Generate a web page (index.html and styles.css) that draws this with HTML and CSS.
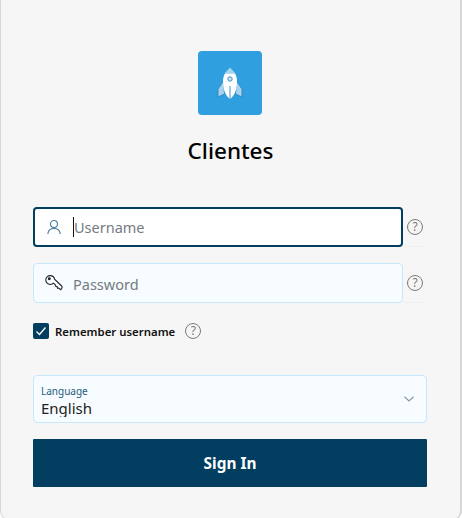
FILE: index.html
```html
<!DOCTYPE html>
<html lang="en">
<head>
<meta charset="utf-8">
<title>Clientes</title>
<link rel="stylesheet" href="styles.css">
</head>
<body>
<main class="card">
  <div class="logo">
    <svg width="32" height="32" viewBox="0 0 32 32">
      <path d="M9.500 14 L4 22 V30 L10.500 27 Z" fill="#a6d3ef" stroke="#2f7fb5" stroke-width=".8"/>
      <path d="M22.500 14 L28 22 V30 L21.500 27 Z" fill="#a6d3ef" stroke="#2f7fb5" stroke-width=".8"/>
      <path d="M16 .5 L10.500 6.500 H21.500 Z" fill="#a6d3ef"/>
      <path d="M16 32 C11 28 9 22 9 14 C9 11 9.800 8.500 11 6.500 H21 C22.200 8.500 23 11 23 14 C23 22 21 28 16 32 Z" fill="#fff"/>
      <circle cx="16" cy="12" r="2.200" fill="#cfe6f6" stroke="#3b8fc8" stroke-width="1"/>
      <path d="M16 19 V32" stroke="#5aa6d8" stroke-width="1.200"/>
    </svg>
  </div>
  <h1 class="title">Clientes</h1>

  <div class="row">
    <div class="field field-focus">
      <svg class="field-icon" width="16" height="16" viewBox="0 0 16 16" fill="none" stroke="#44789a" stroke-width="1.100">
        <circle cx="8" cy="5" r="3.500"/>
        <path d="M1.800 15 C2.200 11.500 4.500 9.500 8 9.500 C11.500 9.500 13.800 11.500 14.200 15"/>
      </svg>
      <span class="caret"></span>
      <span class="placeholder">Username</span>
    </div>
    <div class="help-cell">
      <span class="help">?</span>
    </div>
  </div>

  <div class="row">
    <div class="field">
      <svg class="field-icon" width="18" height="16" viewBox="0 0 18 16" fill="none" stroke="#222" stroke-width="1.100">
        <path d="M.8 5 C.8 2.500 2.800 .6 5.200 .6 C7.400 .6 9.200 2.200 9.600 4.200 L16.600 11 C17.300 11.800 17.200 12.800 16.600 13.500 L15.800 14.800 L13.500 13 L12.500 13.200 L12 11.500 L10.800 11.200 L10.300 9.800 L8.600 8.200 C7.800 9 6.600 9.500 5.200 9.500 C2.800 9.500 .8 7.500 .8 5 Z"/>
        <circle cx="4.300" cy="3.800" r=".9" fill="#222"/>
      </svg>
      <span class="placeholder placeholder-low">Password</span>
    </div>
    <div class="help-cell">
      <span class="help">?</span>
    </div>
  </div>

  <div class="remember">
    <span class="checkbox">
      <svg width="12" height="12" viewBox="0 0 12 12" fill="none" stroke="#fff" stroke-width="1.300"><path d="M1.500 6.500 L4.500 9.500 L10.500 2.500"/></svg>
    </span>
    <span class="remember-label">Remember username</span>
    <span class="help">?</span>
  </div>

  <div class="select">
    <div class="select-text">
      <span class="select-label">Language</span>
      <span class="select-value">English</span>
    </div>
    <svg width="10" height="6" viewBox="0 0 10 6" fill="none" stroke="#8d9aa3" stroke-width="1.200"><path d="M.5 .8 L5 5 L9.500 .8"/></svg>
  </div>

  <button class="signin" type="button">Sign In</button>
</main>
</body>
</html>
```
FILE: styles.css
```css
* { box-sizing: border-box; }
html, body { margin: 0; padding: 0; background: #fff; }
body { height: 518px; overflow: hidden; font-family: "Noto Sans", "Open Sans", sans-serif; color: #000; }

.card {
  width: 462px;
  height: 530px;
  margin-top: -10px;
  padding: 61px 32px 0 32px;
  background: #f6f6f6;
  border: solid #d6d6d6;
  border-width: 0 2px 1px 1px;
  border-radius: 0 0 9px 9px;
  display: flex;
  flex-direction: column;
}

.logo {
  width: 64px;
  height: 64px;
  margin-left: 165px;
  background: #2f9fe0;
  border-radius: 4px;
  display: flex;
  align-items: center;
  justify-content: center;
}

.title {
  margin: 19px 0 39px;
  font-size: 22.500px;
  line-height: 34px;
  font-weight: 500;
  text-align: center;
}

.row { display: flex; margin-bottom: 16px; height: 40px; }

.field {
  width: 370px;
  flex: none;
  height: 40px;
  background: #f6fcff;
  border: 1px solid #c7e8fb;
  border-radius: 4px;
  display: flex;
  align-items: center;
  padding-left: 11px;
}
.field-focus { background: #fff; border: 2px solid #023e60; padding-left: 10px; }
.field-icon { flex: none; width: 18px; margin-right: 10px; }
.caret { width: 1px; height: 20px; background: #111; }
.placeholder { font-size: 14.500px; color: #757b80; }
.placeholder-low { position: relative; top: 1px; }

.help-cell {
  width: 24px;
  flex: none;
  height: 40px;
  display: flex;
  align-items: center;
  justify-content: center;
  border-bottom: 1px solid #f0f0f0;
}
.help {
  width: 16px;
  height: 16px;
  border: 1px solid #7a7a7a;
  border-radius: 50%;
  color: #7a7a7a;
  font-size: 12px;
  line-height: 14px;
  text-align: center;
  flex: none;
}

.remember { display: flex; align-items: center; height: 16px; margin: 4px 0 36px; }
.checkbox {
  width: 16px;
  height: 16px;
  background: #023e60;
  border-radius: 2px;
  display: flex;
  align-items: center;
  justify-content: center;
  margin-right: 6px;
}
.remember-label { font-size: 11.400px; font-weight: 600; margin-right: 10px; color: #111; }

.select {
  width: 394px;
  height: 48px;
  background: #f6fcff;
  border: 1px solid #c7e8fb;
  border-radius: 4px;
  display: flex;
  align-items: center;
  justify-content: space-between;
  padding: 0 12px 0 7px;
  margin-bottom: 16px;
}
.select-text { display: flex; flex-direction: column; padding-top: 4px; }
.select-label { font-size: 10px; line-height: 13px; color: #1f5a7d; margin-top: -1px; }
.select-value { font-size: 15px; line-height: 20px; height: 19px; overflow: hidden; color: #222; }

.signin {
  width: 394px;
  height: 48px;
  border: 0;
  border-radius: 1px;
  background: #023e60;
  color: #fff;
  font: 700 15.400px "Noto Sans", sans-serif;
}
```
